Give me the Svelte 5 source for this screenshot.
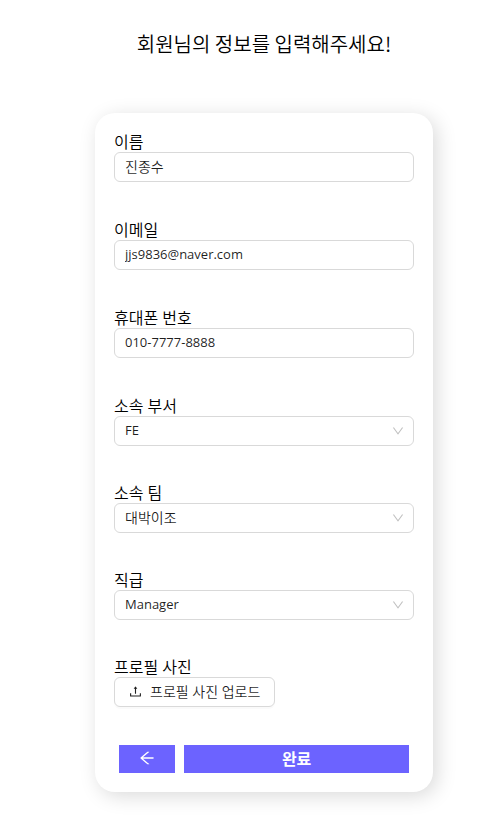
<script>
  let name = $state('진종수');
  let email = $state('jjs9836@naver.com');
  let phone = $state('010-7777-8888');
  let department = $state('FE');
  let team = $state('대박이조');
  let position = $state('Manager');
  let picker;
</script>

<main>
  <h1>회원님의 정보를 입력해주세요!</h1>

  <form onsubmit={(e) => e.preventDefault()}>
    <div class="field">
      <label for="name">이름</label>
      <input id="name" type="text" bind:value={name} />
    </div>
    <div class="field">
      <label for="email">이메일</label>
      <input id="email" class="latin" type="email" bind:value={email} />
    </div>
    <div class="field">
      <label for="phone">휴대폰 번호</label>
      <input id="phone" class="latin" type="tel" bind:value={phone} />
    </div>

    {#snippet chevron()}
      <svg class="chevron" viewBox="64 64 896 896" aria-hidden="true">
        <path d="M884 256h-75c-5.100 0-9.900 2.500-12.900 6.600L512 654.200 227.900 262.600c-3-4.100-7.800-6.600-12.900-6.600h-75c-6.500 0-10.300 7.400-6.500 12.700l352.600 486.100c12.800 17.600 39 17.600 51.700 0l352.600-486.100c3.900-5.300.1-12.700-6.400-12.700z" />
      </svg>
    {/snippet}

    <div class="field">
      <label for="department">소속 부서</label>
      <div class="select">
        <select id="department" class="latin" bind:value={department}>
          <option>FE</option>
        </select>
        {@render chevron()}
      </div>
    </div>
    <div class="field">
      <label for="team">소속 팀</label>
      <div class="select">
        <select id="team" bind:value={team}>
          <option>대박이조</option>
        </select>
        {@render chevron()}
      </div>
    </div>
    <div class="field">
      <label for="position">직급</label>
      <div class="select">
        <select id="position" class="latin" bind:value={position}>
          <option>Manager</option>
        </select>
        {@render chevron()}
      </div>
    </div>

    <div class="field">
      <label for="photo">프로필 사진</label>
      <input id="photo" type="file" accept="image/*" hidden bind:this={picker} />
      <button class="upload" type="button" onclick={() => picker.click()}>
        <svg viewBox="64 64 896 896" aria-hidden="true">
          <path d="M400 317.700h73.900V656c0 4.400 3.600 8 8 8h60c4.400 0 8-3.600 8-8V317.700H624c6.700 0 10.400-7.700 6.300-12.900L518.300 163a8 8 0 00-12.600 0l-112 141.700c-4.100 5.300-.4 13 6.300 13zM878 626h-60c-4.400 0-8 3.600-8 8v154H214V634c0-4.400-3.600-8-8-8h-60c-4.400 0-8 3.600-8 8v198c0 17.700 14.300 32 32 32h684c17.700 0 32-14.300 32-32V634c0-4.400-3.600-8-8-8z" />
        </svg>
        프로필 사진 업로드
      </button>
    </div>

    <div class="actions">
      <button class="back" type="button" aria-label="이전">
        <svg viewBox="64 64 896 896" aria-hidden="true">
          <path d="M872 474H286.900l350.200-304c5.600-4.900 2.200-14-5.200-14h-88.500c-3.900 0-7.600 1.400-10.500 3.900L155 487.800a31.960 31.960 0 000 48.300L535.100 866c1.500 1.300 3.300 2 5.200 2h91.500c7.400 0 10.800-9.200 5.200-14L286.900 550H872c4.400 0 8-3.600 8-8v-60c0-4.400-3.600-8-8-8z" />
        </svg>
      </button>
      <button class="done" type="submit">완료</button>
    </div>
  </form>
</main>

<style>
  :global(body) {
    background: #fff;
  }

  main {
    display: flex;
    flex-direction: column;
    align-items: center;
    padding: 30px 0 24px 30px;
    color: #000;
    font-family: 'Open Sans', 'Noto Sans CJK KR', sans-serif;
    font-weight: 350;
  }

  h1 {
    margin: 0 0 55px;
    font-family: 'Noto Sans CJK KR', sans-serif;
    font-size: 20px;
    font-weight: 350;
    line-height: 28px;
  }

  form {
    box-sizing: border-box;
    width: 100%;
    max-width: 338px;
    padding: 20px 19px 19px;
    border-radius: 20px;
    background: #fff;
    box-shadow: 4px 4px 20px rgba(0, 0, 0, 0.15);
  }

  .field {
    display: flex;
    flex-direction: column;
    align-items: flex-start;
    margin-bottom: 38px;
  }

  .field:has(> input:not([type='file'])) {
    margin-bottom: 39px;
  }

  label {
    font-size: 16px;
    line-height: 19px;
  }

  input,
  select {
    box-sizing: border-box;
    display: block;
    width: 100%;
    height: 30px;
    margin: 0;
    padding: 0 10px 2px;
    border: 1px solid #d9d9d9;
    border-radius: 6px;
    background: #fff;
    color: rgba(0, 0, 0, 0.88);
    font-family: inherit;
    font-size: 14px;
    font-weight: 350;
    outline: none;
  }

  input[hidden] {
    display: none;
  }

  .latin {
    font-size: 13px;
    font-weight: 400;
  }

  .select {
    position: relative;
    width: 100%;
  }

  select {
    appearance: none;
  }

  .chevron {
    position: absolute;
    top: 9px;
    right: 10px;
    width: 12px;
    height: 12px;
    fill: rgba(0, 0, 0, 0.25);
    pointer-events: none;
  }

  button {
    display: flex;
    align-items: center;
    justify-content: center;
    margin: 0;
    font-family: inherit;
    cursor: pointer;
  }

  .upload {
    gap: 8px;
    height: 30px;
    padding: 0 14px 2px;
    border: 1px solid #d9d9d9;
    border-radius: 6px;
    background: #fff;
    box-shadow: 0 2px 0 rgba(0, 0, 0, 0.02);
    color: rgba(0, 0, 0, 0.88);
    font-size: 14px;
    font-weight: 350;
  }

  .upload svg {
    width: 13px;
    height: 13px;
    fill: currentColor;
  }

  .actions {
    display: flex;
    gap: 9px;
    padding: 0 5px;
  }

  .back,
  .done {
    height: 28px;
    padding: 0 0 2px;
    border: 0;
    background: #6c63ff;
    color: #fff;
    font-size: 16px;
    font-weight: 700;
  }

  .back {
    flex: 1;
  }

  .done {
    flex: 4;
  }

  .back svg {
    width: 16px;
    height: 16px;
    fill: currentColor;
  }
</style>
